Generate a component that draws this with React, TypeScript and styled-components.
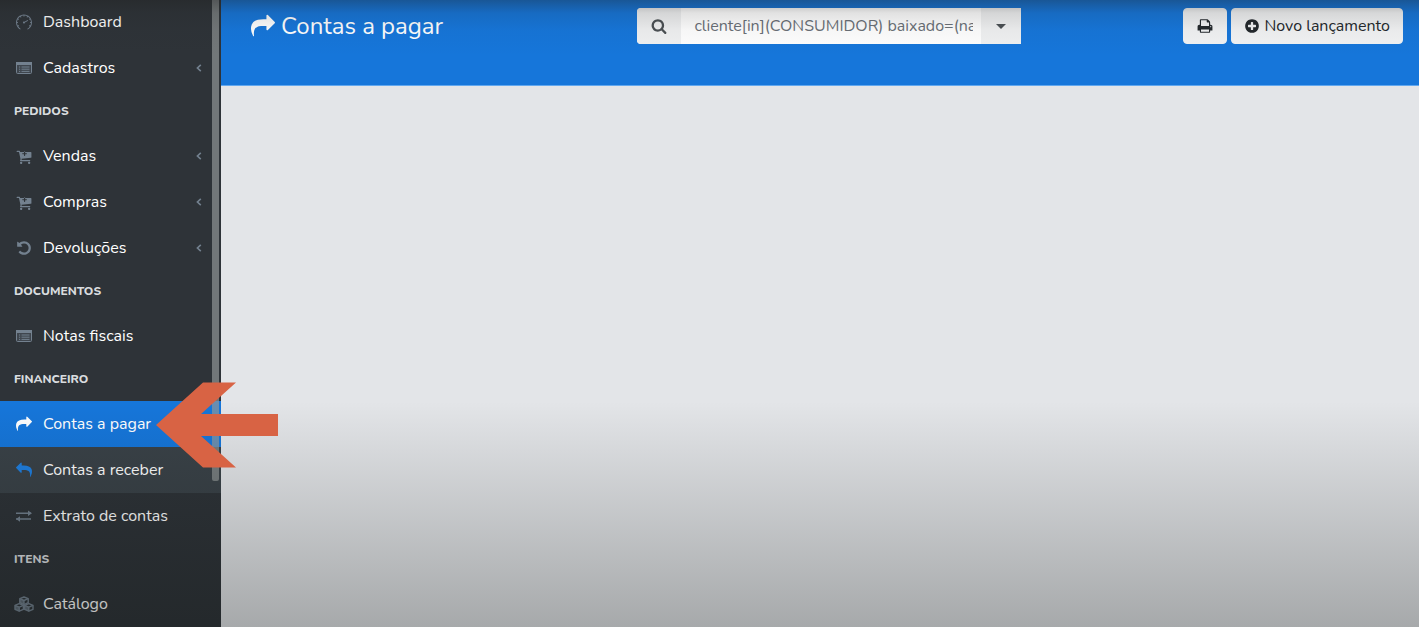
import React from "react";
import styled, { createGlobalStyle, css } from "styled-components";
import { SlSpeedometer } from "react-icons/sl";

const Global = createGlobalStyle`
  *, *::before, *::after { box-sizing: border-box; }
  body {
    margin: 0;
    background: #e3e5e8;
    font-family: Nunito, "Open Sans", "Noto Sans", sans-serif;
    font-size: 16px;
    color: #23282c;
  }
  button, input { font: inherit; }
`;

const Shell = styled.div`
  position: relative;
  display: flex;
  height: 100vh;
  overflow: hidden;
`;

const Shade = styled.div`
  position: absolute;
  inset: 0;
  z-index: 2;
  pointer-events: none;
  background:
    linear-gradient(to bottom, rgba(30, 30, 30, 0.36), rgba(30, 30, 30, 0.13) 13px, rgba(30, 30, 30, 0.04) 30px, transparent 56px),
    linear-gradient(to bottom, transparent 64%, rgba(10, 14, 12, 0.28));
`;

const Sidebar = styled.nav`
  position: relative;
  flex: 0 0 221px;
  background: #2e3338;
`;

const Menu = styled.ul`
  list-style: none;
  margin: -1px 0 0;
  padding: 0;
`;

const SectionTitle = styled.li`
  height: 42px;
  padding: 10px 14px;
  line-height: 20px;
  font-size: 12px;
  font-weight: 800;
  color: #d9dcdf;
`;

const NavLink = styled.a<{ $state?: "active" | "hover" }>`
  display: flex;
  align-items: center;
  gap: 10px;
  height: 46px;
  padding: 0 19px 0 15px;
  color: #fff;
  font-weight: 400;
  text-decoration: none;
  svg { color: #73818f; }
  ${(p) => p.$state === "active" && css`
    background: #1676da;
    svg { color: #fff; }
  `}
  ${(p) => p.$state === "hover" && css`
    background: #3a4248;
    svg { color: #1f7fe0; }
  `}
`;

const Label = styled.span`
  flex: 1;
  white-space: nowrap;
`;

const ScrollThumb = styled.div`
  position: absolute;
  top: 0;
  right: 2px;
  width: 7px;
  height: 481px;
  border-radius: 0 0 2px 2px;
  background: rgba(150, 155, 155, 0.66);
`;

const Main = styled.main`
  flex: 1;
  min-width: 0;
`;

const Header = styled.header`
  display: grid;
  grid-template-columns: 81fr 384px 80fr;
  align-items: start;
  height: 86px;
  padding: 8px 16px 0 30px;
  background: #1676da;
  border-bottom: 1px solid #62a8ef;
`;

const Title = styled.h1`
  display: flex;
  align-items: center;
  gap: 6px;
  margin: 0;
  line-height: 36px;
  font-size: 24px;
  font-weight: 400;
  color: #fff;
  white-space: nowrap;
`;

const SearchGroup = styled.form`
  display: flex;
  height: 36px;
  background: #fff;
  border-radius: 4px 0 0 4px;
  overflow: hidden;
`;

const AddOn = styled.button<{ $width: number }>`
  display: flex;
  align-items: center;
  justify-content: center;
  flex: 0 0 ${(p) => p.$width}px;
  padding: 0;
  border: 0;
  background: #f0f1f2;
  color: #4b5054;
`;

const SearchInput = styled.input`
  flex: 1;
  min-width: 0;
  padding: 0 8px 0 13px;
  border: 0;
  outline: 0;
  background: #fff;
  color: #6a7077;
`;

const Actions = styled.div`
  display: flex;
  justify-content: flex-end;
  gap: 4px;
`;

const Button = styled.button<{ $pad: number }>`
  display: flex;
  align-items: center;
  gap: 4px;
  height: 36px;
  padding: 0 ${(p) => p.$pad}px;
  border: 1px solid #f0f3f5;
  border-radius: 4px;
  background: #f2f3f4;
  color: #23282c;
  white-space: nowrap;
`;

const Pointer = styled.svg`
  position: absolute;
  left: 156px;
  top: 382px;
  z-index: 3;
`;

const shapes = {
  share: "M1792 640q0 26-19 45l-512 512q-19 19-45 19t-45-19-19-45v-256h-224q-98 0-175.5 6t-154 21.5-133 42.5-105.5 69.5-80 101-48.5 138.5-17.5 181q0 55 5 123 0 6 2.5 23.5t2.5 26.5q0 15-8.5 25t-23.5 10q-16 0-28-17-7-9-13-22t-13.5-30-10.5-24q-127-285-127-451 0-199 53-333 162-403 875-403h224v-256q0-26 19-45t45-19 45 19l512 512q19 19 19 45z",
  undo: "M1664 896q0 156-61 298t-164 245-245 164-298 61q-172 0-327-72.5t-264-204.5q-7-10-6.5-22.5t8.5-20.5l137-138q10-9 25-9 16 2 23 12 73 95 179 147t225 52q104 0 198.5-40.5t163.5-109.5 109.5-163.5 40.5-198.5-40.5-198.5-109.5-163.5-163.5-109.5-198.5-40.5q-98 0-188 35.5t-160 101.5l137 138q31 30 14 69-17 40-59 40h-448q-26 0-45-19t-19-45v-448q0-42 40-59 39-17 69 14l130 129q107-101 244.5-156.5t284.5-55.5q156 0 298 61t245 164 164 245 61 298z",
  cart: "M1216 640q0-26-19-45t-45-19h-128v-128q0-26-19-45t-45-19-45 19-19 45v128h-128q-26 0-45 19t-19 45 19 45 45 19h128v128q0 26 19 45t45 19 45-19 19-45v-128h128q26 0 45-19t19-45zm-512 1024q0 53-37.5 90.5t-90.5 37.5-90.5-37.5-37.5-90.5 37.5-90.5 90.5-37.5 90.5 37.5 37.5 90.5zm896 0q0 53-37.5 90.5t-90.5 37.5-90.5-37.5-37.5-90.5 37.5-90.5 90.5-37.5 90.5 37.5 37.5 90.5zm128-1152v512q0 24-16 42.5t-41 21.5l-1044 122q1 7 4.5 21.5t6 26.5 2.5 22q0 16-24 64h920q26 0 45 19t19 45-19 45-45 19h-1024q-26 0-45-19t-19-45q0-14 11-39.5t29.5-59.5 20.5-38l-177-823h-204q-26 0-45-19t-19-45 19-45 45-19h256q16 0 28.5 6.5t20 15.5 13 24.5 7.5 26.5 5.5 29.5 4.5 25.5h1201q26 0 45 19t19 45z",
  search: "M1216 832q0-185-131.5-316.5t-316.5-131.5-316.5 131.5-131.5 316.5 131.5 316.5 316.5 131.5 316.5-131.5 131.5-316.5zm512 832q0 52-38 90t-90 38q-54 0-90-38l-343-342q-179 124-399 124-143 0-273.5-55.5t-225-150-150-225-55.5-273.5 55.5-273.5 150-225 225-150 273.5-55.5 273.5 55.5 225 150 150 225 55.5 273.5q0 220-124 399l343 343q37 37 37 90z",
  print: "M448 1536h896v-256h-896v256zm0-640h896v-384h-160q-40 0-68-28t-28-68v-160h-640v640zm1152 64q0-26-19-45t-45-19-45 19-19 45 19 45 45 19 45-19 19-45zm128 0v416q0 13-9.5 22.5t-22.5 9.5h-224v160q0 40-28 68t-68 28h-960q-40 0-68-28t-28-68v-160h-224q-13 0-22.5-9.5t-9.5-22.5v-416q0-79 56.5-135.5t135.5-56.5h64v-544q0-40 28-68t68-28h672q40 0 88 20t76 48l152 152q28 28 48 76t20 88v256h64q79 0 135.5 56.5t56.5 135.5z",
  plus: "M1344 960v-128q0-26-19-45t-45-19h-256v-256q0-26-19-45t-45-19h-128q-26 0-45 19t-19 45v256h-256q-26 0-45 19t-19 45v128q0 26 19 45t45 19h256v256q0 26 19 45t45 19h128q26 0 45-19t19-45v-256h256q26 0 45-19t19-45zm320-64q0 209-103 385.5t-279.5 279.5-385.5 103-385.5-103-279.5-279.5-103-385.5 103-385.5 279.5-279.5 385.5-103 385.5 103 279.5 279.5 103 385.5z",
};

const Glyph = ({ d, size = 16, flip = false }: { d: string; size?: number; flip?: boolean }) => (
  <svg width={size} height={size} viewBox="0 0 1792 1792" fill="currentColor" aria-hidden="true">
    <path d={d} transform={flip ? "matrix(-1 0 0 1 1792 0)" : undefined} />
  </svg>
);

const ListIcon = () => (
  <svg width="18" height="14" viewBox="0 0 18 14" aria-hidden="true">
    <rect x="1.5" y="1.5" width="15" height="11" rx="1" fill="currentColor" fillOpacity="0.25" stroke="currentColor" />
    <path d="M1 1h16v3H1z" fill="currentColor" />
    <path d="M4 6h1.2M6.5 6h8M4 8.2h1.2M6.5 8.2h8M4 10.4h1.2M6.5 10.4h8" stroke="currentColor" />
  </svg>
);

const ExchangeIcon = () => (
  <svg width="18" height="14" viewBox="0 0 18 14" fill="none" stroke="currentColor" aria-hidden="true">
    <path d="M1 4.2h15M1 10h15" strokeWidth="1.5" />
    <path d="M13 1.5l4 2.7-4 2.7zM5 7.3L1 10l4 2.7z" fill="currentColor" stroke="none" />
  </svg>
);

const CubesIcon = () => (
  <svg width="20" height="16" viewBox="0 0 20 16" fill="none" stroke="currentColor" strokeWidth="1.4" strokeLinejoin="round" aria-hidden="true">
    {[[10, 1], [5.2, 7.6], [14.8, 7.6]].map(([x, y]) => (
      <g key={x} transform={`translate(${x} ${y})`}>
        <path d="M0 0L4.2 1.7V5.7L0 7.6L-4.2 5.7V1.7z" />
        <path d="M-4.2 1.7L0 3.5L4.2 1.7M0 3.5V7.6" />
        <path d="M0 3.5L-4.2 1.7V5.7L0 7.6z" fill="currentColor" fillOpacity="0.7" stroke="none" />
      </g>
    ))}
  </svg>
);

const Chevron = () => (
  <svg width="6" height="8" viewBox="0 0 6 8" fill="none" stroke="currentColor" strokeWidth="1.6" aria-hidden="true">
    <path d="M4.8 0.8L1.4 4l3.4 3.2" />
  </svg>
);

const IconBox = styled.span`
  display: flex;
  align-items: center;
  justify-content: center;
  flex: 0 0 18px;
  min-width: 0;
  svg { flex: none; }
`;

type ItemProps = { icon: React.ReactNode; text: string; more?: boolean; state?: "active" | "hover" };

const Item = ({ icon, text, more, state }: ItemProps) => (
  <li>
    <NavLink href="#" $state={state} aria-current={state === "active" ? "page" : undefined}>
      <IconBox>{icon}</IconBox>
      <Label>{text}</Label>
      {more && <Chevron />}
    </NavLink>
  </li>
);

export default function App() {
  return (
    <Shell>
      <Global />
      <Sidebar aria-label="Menu">
        <Menu>
          <Item icon={<SlSpeedometer size={16} />} text="Dashboard" />
          <Item icon={<ListIcon />} text="Cadastros" more />
          <SectionTitle>PEDIDOS</SectionTitle>
          <Item icon={<Glyph d={shapes.cart} />} text="Vendas" more />
          <Item icon={<Glyph d={shapes.cart} />} text="Compras" more />
          <Item icon={<Glyph d={shapes.undo} />} text="Devoluções" more />
          <SectionTitle>DOCUMENTOS</SectionTitle>
          <Item icon={<ListIcon />} text="Notas fiscais" />
          <SectionTitle>FINANCEIRO</SectionTitle>
          <Item icon={<Glyph d={shapes.share} />} text="Contas a pagar" state="active" />
          <Item icon={<Glyph d={shapes.share} flip />} text="Contas a receber" state="hover" />
          <Item icon={<ExchangeIcon />} text="Extrato de contas" />
          <SectionTitle>ITENS</SectionTitle>
          <Item icon={<CubesIcon />} text="Catálogo" />
        </Menu>
        <ScrollThumb />
      </Sidebar>
      <Main>
        <Header>
          <Title>
            <Glyph d={shapes.share} size={24} />
            Contas a pagar
          </Title>
          <SearchGroup onSubmit={(e) => e.preventDefault()}>
            <AddOn $width={44} aria-label="Pesquisar">
              <Glyph d={shapes.search} />
            </AddOn>
            <SearchInput aria-label="Filtro" defaultValue="cliente[in](CONSUMIDOR) baixado=(nao)" />
            <AddOn $width={40} type="button" aria-label="Opções">
              <svg width="10" height="5" viewBox="0 0 10 5" aria-hidden="true">
                <path d="M0 0h10L5 5z" fill="currentColor" />
              </svg>
            </AddOn>
          </SearchGroup>
          <Actions>
            <Button $pad={13} aria-label="Imprimir">
              <Glyph d={shapes.print} />
            </Button>
            <Button $pad={12}>
              <Glyph d={shapes.plus} />
              Novo lançamento
            </Button>
          </Actions>
        </Header>
      </Main>
      <Shade />
      <Pointer width="122" height="86" viewBox="0 0 122 86" aria-hidden="true">
        <path d="M0 43L47 0.5H80L45 32H122V54H45L80 85.5H47z" fill="#d86344" />
      </Pointer>
    </Shell>
  );
}
